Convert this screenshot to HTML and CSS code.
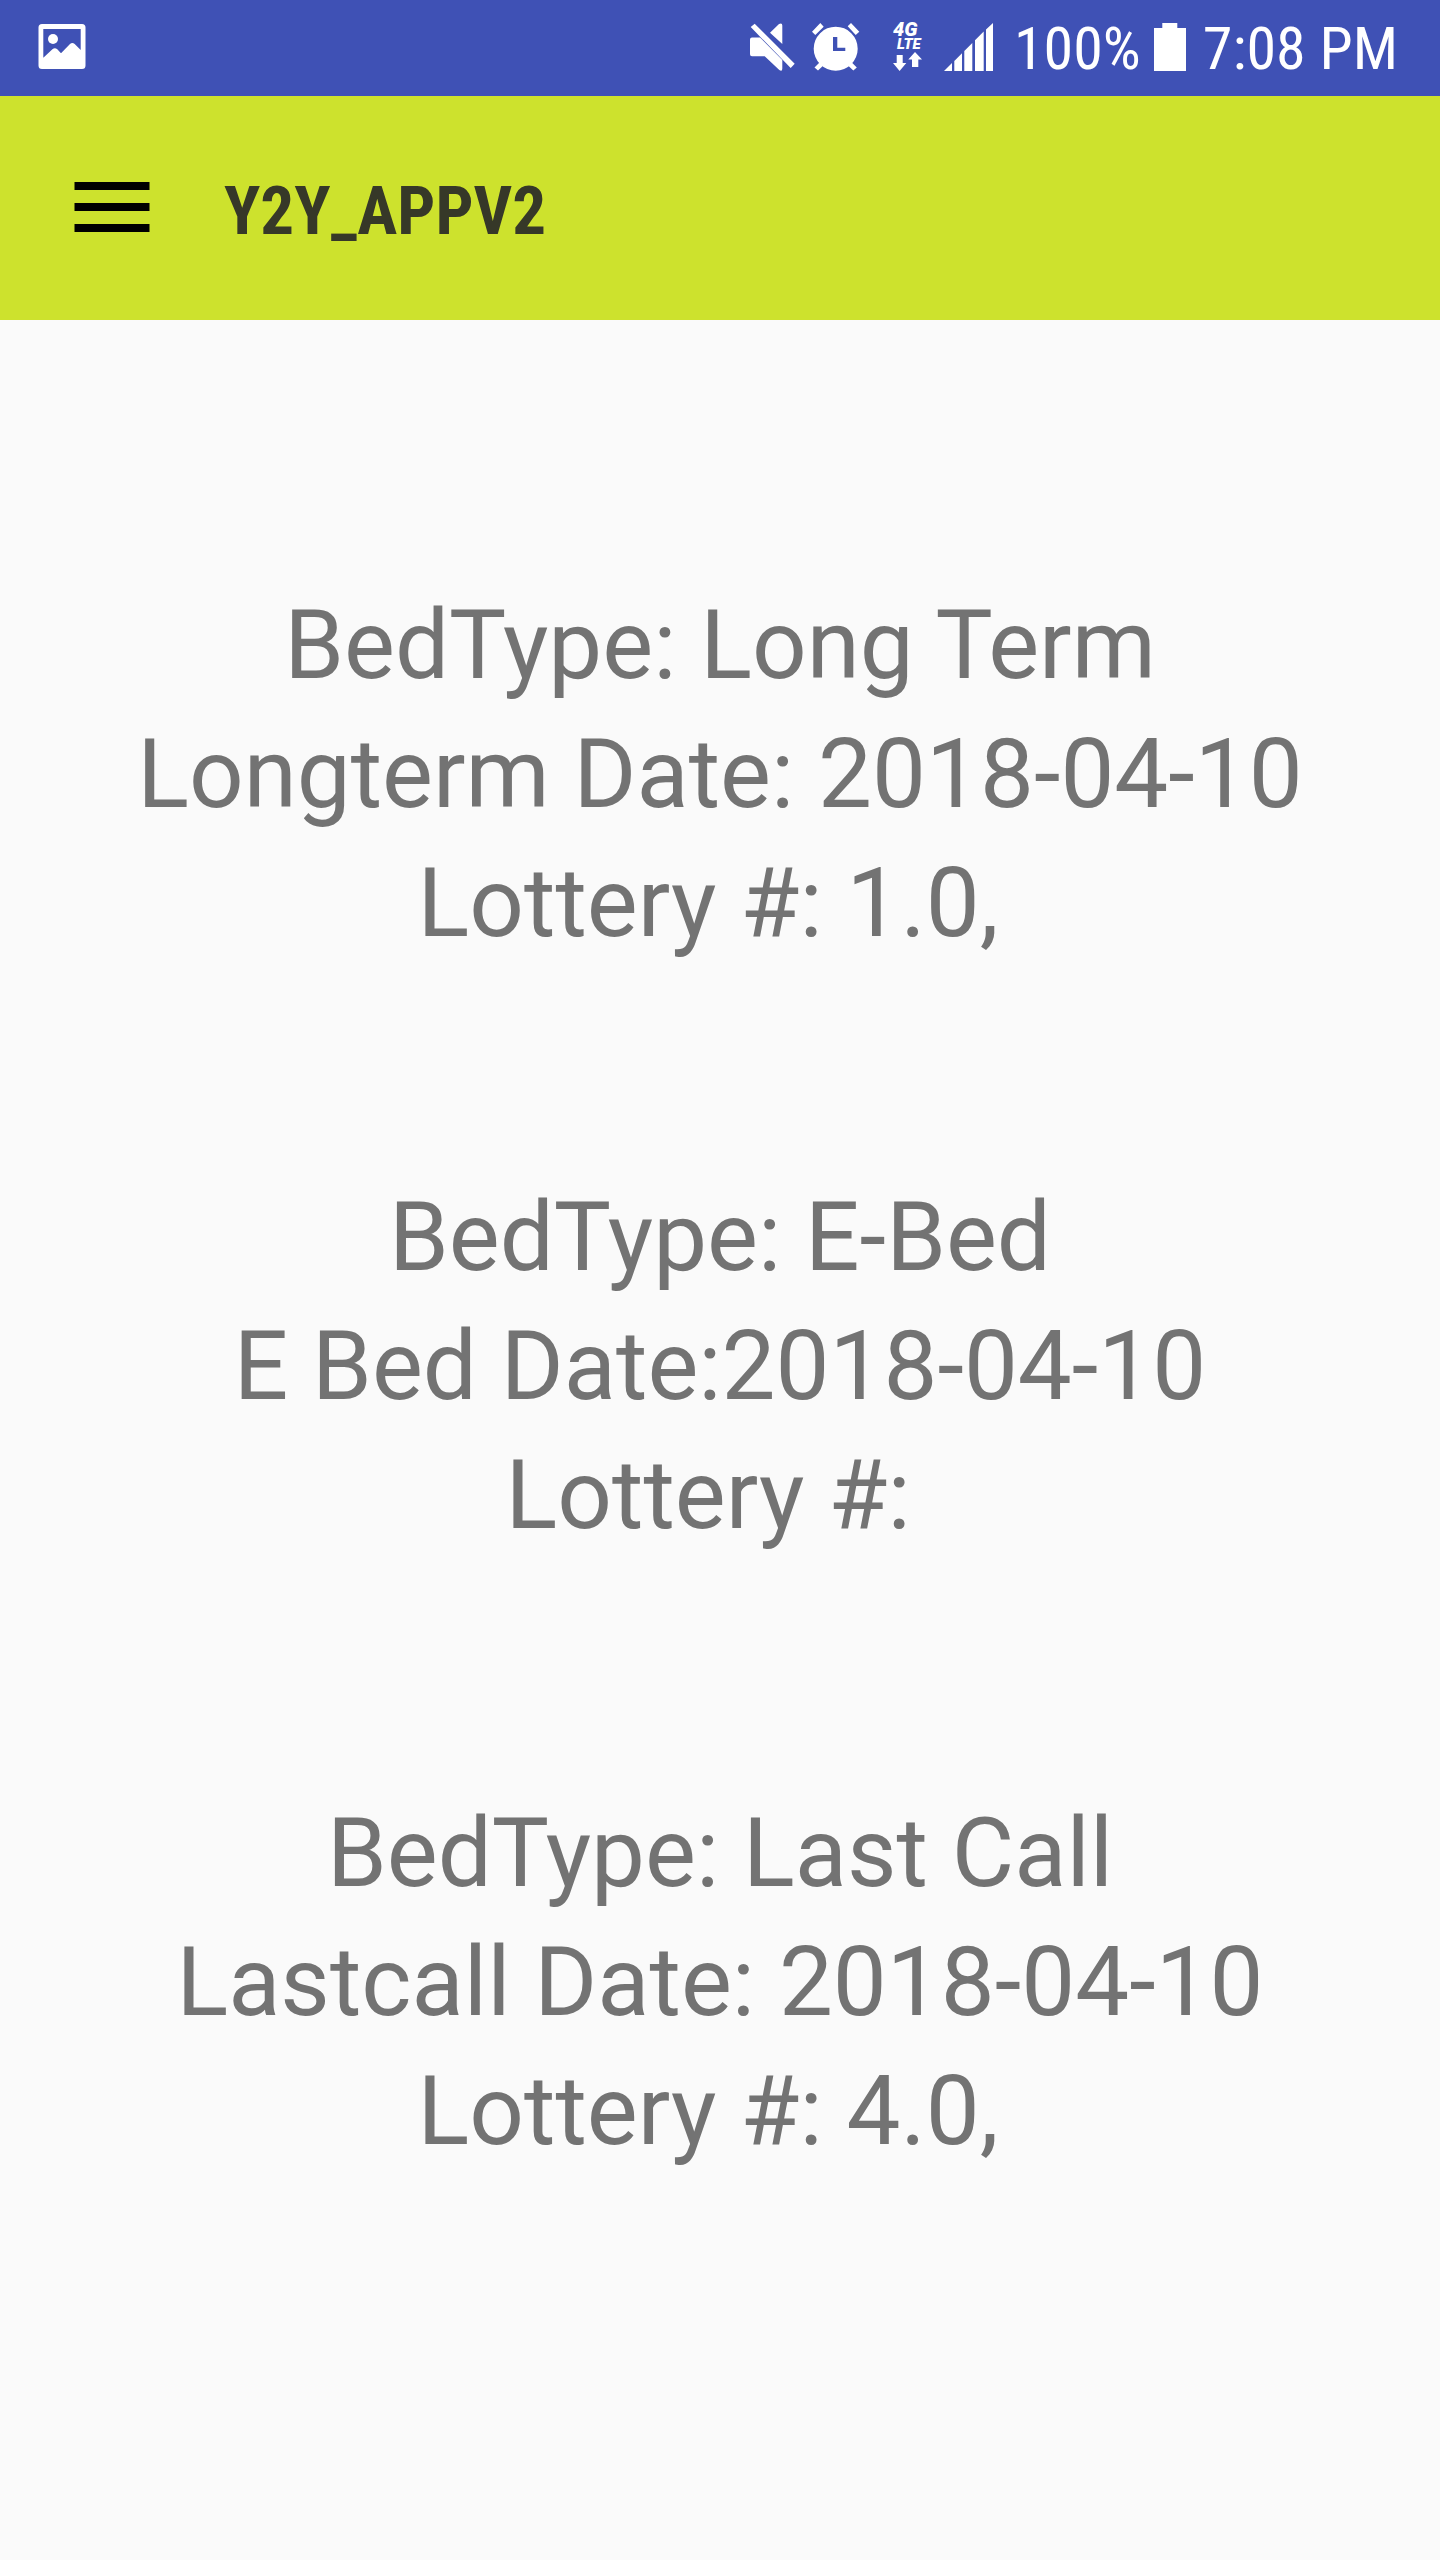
FILE: index.html
```html
<!DOCTYPE html>
<html lang="en">
<head>
<meta charset="utf-8">
<meta name="viewport" content="width=device-width">
<title>Y2Y_APPV2</title>
<link rel="stylesheet" href="styles.css">
</head>
<body>
<div class="status">
  <svg class="icon" width="48" height="48" viewBox="0 0 48 48" role="img" aria-label="Picture saved"><path fill-rule="evenodd" d="M4 1h40q3.500 0 3.500 3.500v38q0 3.500-3.500 3.500H4q-3.500 0-3.500-3.500v-38Q.5 1 4 1zM5.300 6v28.700L14.700 26q2.300-1.600 4.600.3l3.700 4 9-9.300q2.300-2 4.700 0l6 6V6z"/><circle cx="15" cy="16" r="5"/></svg>
  <div class="system">
    <div class="alerts">
      <svg class="icon" width="45" height="48" viewBox="0 0 45 48" role="img" aria-label="Muted"><path d="M.7 4L4.700.7l40 40-4 4.300zM20 9.700L29 1q3.300-1.500 3.300 1.500V21zM2 14.500h8L32.300 37v8.500q0 3.500-3 1.500L14.700 33.300H2q-2 0-2-2V16.500q0-2 2-2z"/></svg>
      <svg class="icon" width="48" height="48" viewBox="0 0 48 48" role="img" aria-label="Alarm set"><path fill-rule="evenodd" d="M23.700 3.700a22 22 0 1 1 0 44 22 22 0 0 1 0-44zM21 14v14h12.300v-3.300h-8V14z"/><path d="M0 8.700L8.300 0l3.400 3.700L3.300 12zM35.700 3.300L39 0l8.300 8.700-3.600 3.300zM2.500 44.500l8-8 4 3-8.500 8zM44.800 44.500l-8-8-4 3 8.500 8z"/></svg>
    </div>
    <svg class="icon" width="30" height="62" viewBox="0 -6 30 62" role="img" aria-label="4G LTE data"><text class="network-type" x="0" y="14">4G</text><text class="network-name" x="4" y="27">LTE</text><path d="M3.700 33h6v8h3.600l-6.700 8L0 41h3.700zM22 30l7 7.500h-3.700V45H19v-7.500h-3.700z"/></svg>
    <svg class="icon" width="49" height="48" viewBox="0 0 49 48" role="img" aria-label="Full signal"><path d="M0 48l8-8v8zM10.300 48V38l7.700-7.700V48zM20.300 48V28l8-8v28zM31 48V17.300l8.700-8.700V48zM42 48V6.500L49 0v48z"/></svg>
    <span>100%</span>
    <svg class="icon battery" width="32" height="48" viewBox="0 0 32 48" aria-hidden="true"><path d="M8.300 0h15v5H32v43H0V5h8.300z"/></svg>
    <time datetime="19:08">7:08 PM</time>
  </div>
</div>
<header class="bar">
  <button class="menu" type="button" aria-label="Open menu"><svg class="menu-icon" width="76" height="50" viewBox="0 0 76 50" aria-hidden="true"><path d="M.5 0h75v8H.5zM.5 21h75v8H.5zM.5 42h75v8H.5z"/></svg></button>
  <h1 class="title">Y2Y_APPV2</h1>
</header>
<main class="beds">
  <p class="bed">BedType: Long Term<br>Longterm Date: 2018-04-10<br>Lottery #: 1.0,&nbsp;</p>
  <p class="bed">BedType: E-Bed<br>E Bed Date:2018-04-10<br>Lottery #:&nbsp;</p>
  <p class="bed bed-last">BedType: Last Call<br>Lastcall Date: 2018-04-10<br>Lottery #: 4.0,&nbsp;</p>
</main>
</body>
</html>
```
FILE: styles.css
```css
body {
  margin: 0;
  background: #fafafa;
  font-family: Roboto, sans-serif;
}

.status {
  box-sizing: border-box;
  height: 96px;
  padding: 0 42px 2px 38px;
  display: flex;
  align-items: center;
  justify-content: space-between;
  background: #3f51b5;
  color: #fff;
}

.icon {
  display: block;
  flex: none;
  fill: currentColor;
}

.system {
  display: flex;
  align-items: center;
  gap: 21px;
  font: 60px/72px "Roboto Condensed", Roboto, sans-serif;
}

.system span,
.system time {
  padding-top: 4px;
}

.alerts {
  display: flex;
  gap: 17px;
  margin-right: 12px;
}

.battery {
  margin: 0 -4px 0 -8px;
}

.network-type {
  font: italic 900 20px/20px Roboto, sans-serif;
}

.network-name {
  font: italic 900 15px/15px Roboto, sans-serif;
}

.bar {
  box-sizing: border-box;
  height: 224px;
  padding: 0 74px 2px;
  display: flex;
  align-items: center;
  gap: 74px;
  background: #cde22d;
}

.menu {
  padding: 0;
  border: 0;
  background: none;
  cursor: pointer;
}

.menu-icon {
  display: block;
}

.title {
  margin: 0;
  padding-top: 8px;
  font: bold 67px/80px "Roboto Condensed", Roboto, sans-serif;
  color: #363828;
}

.beds {
  padding: 261px 16px 64px;
  text-align: center;
  color: #737373;
}

.bed {
  margin: 0 0 205px;
  font-size: 96px;
  line-height: 129px;
}

.bed-last {
  margin: 229px 0 0;
}
```
